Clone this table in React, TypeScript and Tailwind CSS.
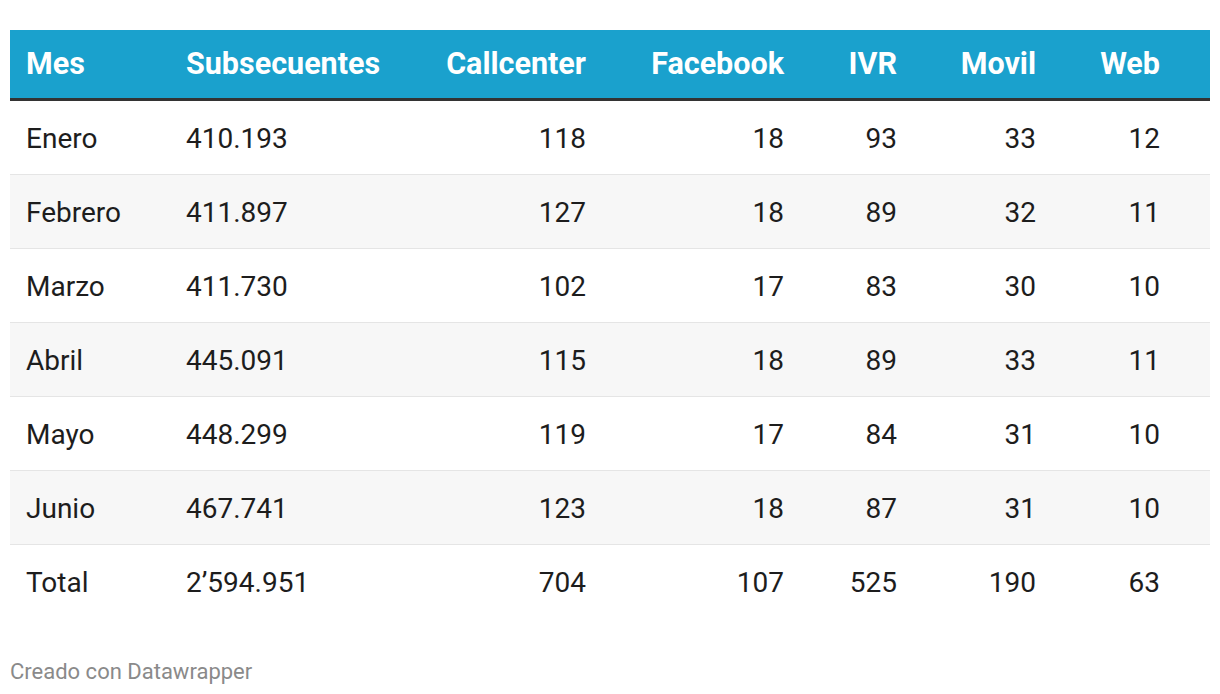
const rows = [
  ['Enero', '410.193', '118', '18', '93', '33', '12'],
  ['Febrero', '411.897', '127', '18', '89', '32', '11'],
  ['Marzo', '411.730', '102', '17', '83', '30', '10'],
  ['Abril', '445.091', '115', '18', '89', '33', '11'],
  ['Mayo', '448.299', '119', '17', '84', '31', '10'],
  ['Junio', '467.741', '123', '18', '87', '31', '10'],
];

const total = ['Total', '2’594.951', '704', '107', '525', '190', '63'];

const headers = ['Mes', 'Subsecuentes', 'Callcenter', 'Facebook', 'IVR', 'Movil', 'Web'];

// grid columns: Mes | Subsecuentes | Callcenter | Facebook | IVR | Movil | Web
const cols = 'grid grid-cols-[160px_200px_232px_198px_113px_139px_158px]';

function Cells({ cells }: { cells: string[] }) {
  return (
    <>
      <div className="pl-4">{cells[0]}</div>
      <div className="pl-4">{cells[1]}</div>
      <div className="pr-4 text-right">{cells[2]}</div>
      <div className="pr-4 text-right">{cells[3]}</div>
      <div className="pr-4 text-right">{cells[4]}</div>
      <div className="pr-4 text-right">{cells[5]}</div>
      <div className="pr-[50px] text-right">{cells[6]}</div>
    </>
  );
}

export default function App() {
  return (
    <div className="bg-white w-[1220px] h-[694px] pt-[30px] px-[10px] font-['Roboto',sans-serif] text-[#1d1d1d]">
      <div className={`${cols} items-center h-[71px] bg-[#1aa1cd] border-b-[3px] border-[#333333] text-white font-bold text-[30.5px] whitespace-nowrap`}>
        <Cells cells={headers} />
      </div>
      {rows.map((r, i) => (
        <div
          key={r[0]}
          className={`${cols} items-center h-[74px] text-[28px] pt-[2px] border-b border-[#e5e5e5] ${i % 2 === 1 ? 'bg-[#f7f7f7]' : ''}`}
        >
          <Cells cells={r} />
        </div>
      ))}
      <div className={`${cols} items-center h-[74px] text-[28px] pt-[2px]`}>
        <Cells cells={total} />
      </div>
      <p className="mt-[36px] text-[22px] text-[#8a8a8a]">Creado con Datawrapper</p>
    </div>
  );
}
